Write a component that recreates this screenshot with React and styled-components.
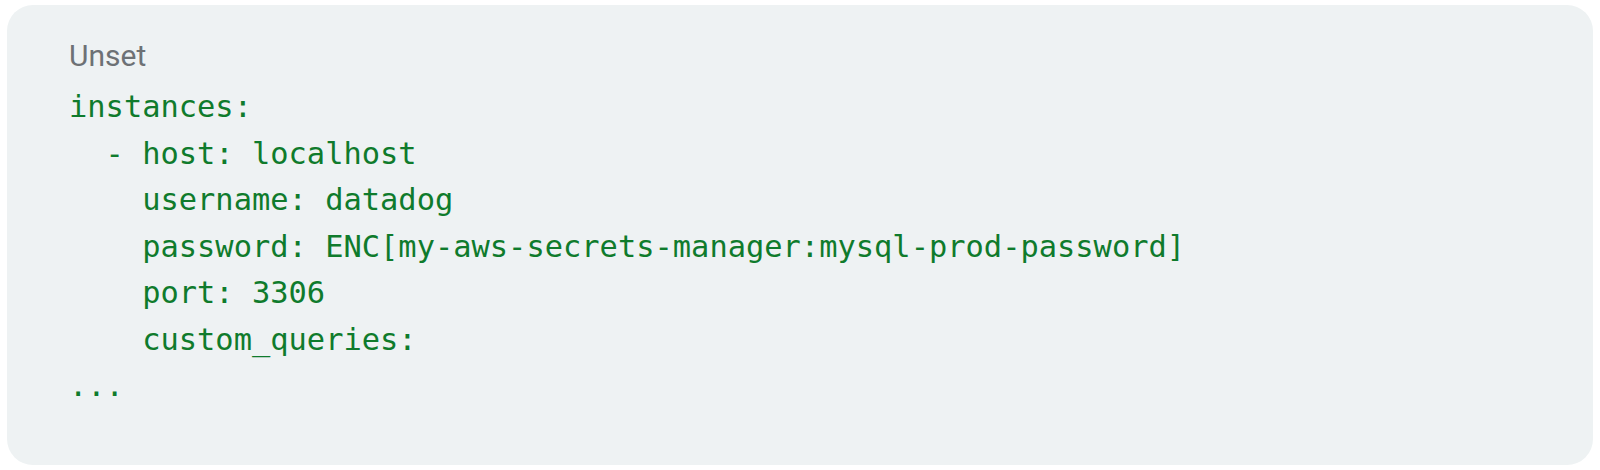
import React from "react";
import styled, { createGlobalStyle } from "styled-components";

const GlobalStyle = createGlobalStyle`
  html, body {
    margin: 0;
    padding: 0;
    background: #ffffff;
  }
`;

const Page = styled.div`
  padding: 5px 7px;
`;

const CodeCard = styled.div`
  box-sizing: border-box;
  height: 460px;
  background: #eef2f3;
  border-radius: 26px;
  padding: 33px 62px 0;
`;

const Language = styled.div`
  font-family: Roboto, "Liberation Sans", sans-serif;
  font-size: 30px;
  line-height: 36px;
  color: #6d7175;
  margin-bottom: 10px;
`;

const Code = styled.pre`
  margin: 0;
  font-family: "DejaVu Sans Mono", "Liberation Mono", monospace;
  font-size: 30.4px;
  line-height: 46.5px;
  color: #0f7b2c;
  white-space: pre;
`;

const yaml = `instances:
  - host: localhost
    username: datadog
    password: ENC[my-aws-secrets-manager:mysql-prod-password]
    port: 3306
    custom_queries:
...`;

const App = () => {
  return (
    <Page>
      <GlobalStyle />
      <CodeCard>
        <Language>Unset</Language>
        <Code>{yaml}</Code>
      </CodeCard>
    </Page>
  );
};

export default App;
